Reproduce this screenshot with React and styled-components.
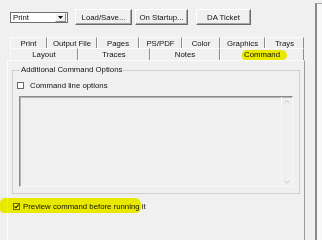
import React from 'react';
import styled, { createGlobalStyle } from 'styled-components';

const GlobalStyle = createGlobalStyle`
  html, body { margin: 0; padding: 0; background: #f0f0f0; }
  body {
    font-family: "Liberation Sans", Arial, sans-serif;
    font-size: 7.8px;
    color: #111;
  }
`;

const Screen = styled.div`
  width: 322px;
  height: 240px;
  overflow: hidden;
  display: flex;
  background: #f0f0f0;
  white-space: nowrap;
`;

const Dialog = styled.div`
  flex: 0 0 315px;
  display: flex;
  flex-direction: column;
  padding: 9px 0 0 7px;
  box-sizing: border-box;
`;

const SideWindow = styled.div`
  flex: 1;
  margin-top: 3px;
  border-left: 2px solid #8a8a8a;
  border-top: 1px solid #a8a8a8;
  background: #f8f8f8;
`;

const Toolbar = styled.div`
  display: flex;
  align-items: center;
  height: 16px;
  padding-left: 3px;
`;

const Combo = styled.div`
  width: 58px;
  height: 11px;
  box-sizing: border-box;
  display: flex;
  align-items: center;
  background: #fff;
  border: 1px solid #6e6e6e;
  padding-left: 2px;
`;

const ComboText = styled.span`
  flex: 1;
  line-height: 9px;
`;

const ComboArrow = styled.span`
  width: 9px;
  height: 7px;
  margin-right: 1px;
  display: flex;
  align-items: center;
  justify-content: center;
  background: #f0f0f0;
  border: 1px solid;
  border-color: #fff #8a8a8a #8a8a8a #fff;
`;

const Button = styled.div`
  width: ${p => p.$w}px;
  margin-left: ${p => p.$ml}px;
  height: 16px;
  box-sizing: border-box;
  display: flex;
  align-items: center;
  justify-content: center;
  border: 1px solid;
  border-color: #fff #6a6a6a #6a6a6a #fff;
  box-shadow: inset -1px -1px 0 #a8a8a8;
`;

const Tabs = styled.div`
  margin-top: 12px;
  display: flex;
  flex-direction: column;
  flex: 1;
`;

const TabRow = styled.div`
  display: flex;
  padding-left: 3px;
  height: ${p => p.$h}px;
`;

const Tab = styled.div`
  position: relative;
  width: ${p => p.$w}px;
  box-sizing: border-box;
  display: flex;
  align-items: center;
  justify-content: center;
  border-top: 1px solid #fbfbfb;
  border-left: 1px solid #fbfbfb;
  border-right: 1px solid #8c8c8c;
  line-height: 9px;
`;

const Marker = styled.span`
  position: absolute;
  left: ${p => p.$l}px;
  top: ${p => p.$t}px;
  width: ${p => p.$w}px;
  height: ${p => p.$h}px;
  background: #f7f700;
  border-radius: 5px 6px 5px 4px;
  mix-blend-mode: multiply;
  pointer-events: none;
`;

const Panel = styled.div`
  width: 298px;
  flex: 1;
  box-sizing: border-box;
  border-left: 1px solid #fbfbfb;
  border-top: 1px solid #fbfbfb;
  border-right: 1px solid #9a9a9a;
  padding: 4px 4px 0 4px;
`;

const Group = styled.fieldset`
  margin: 0;
  height: 129px;
  box-sizing: border-box;
  padding: 0 6px 6px 4px;
  border: 1px solid #cfcfcf;
  display: flex;
  flex-direction: column;
  min-width: 0;
`;

const Legend = styled.legend`
  padding: 0 1px;
  margin-left: 3px;
  line-height: 10px;
`;

const CheckRow = styled.label`
  position: relative;
  display: flex;
  align-items: center;
  gap: ${p => p.$gap}px;
  height: 12px;
  margin: ${p => p.$m};
`;

const Box = styled.span`
  width: 7px;
  height: 7px;
  box-sizing: border-box;
  background: #fff;
  border: 1px solid #6a6a6a;
  display: flex;
  align-items: center;
  justify-content: center;
`;

const TextArea = styled.div`
  margin: 5px 0 0 2px;
  flex: 1;
  display: flex;
  justify-content: flex-end;
  border: 1px solid;
  border-color: #8a8a8a #f8f8f8 #f8f8f8 #8a8a8a;
  box-shadow: inset 1px 1px 0 #b4b4b4;
  background: #f0f0f0;
`;

const ScrollBar = styled.div`
  width: 10px;
  display: flex;
  flex-direction: column;
  justify-content: space-between;
  align-items: center;
  padding: 3px 0 2px;
  border-left: 1px solid #f8f8f8;
`;

const Check = () => (
  <svg width="5" height="5" viewBox="0 0 5 5">
    <polyline points="0.5,2.3 2,3.8 4.6,0.6" fill="none" stroke="#111" strokeWidth="1.1" />
  </svg>
);

const Chevron = ({ down }) => (
  <svg width="6" height="4" viewBox="0 0 6 4">
    <polyline points={down ? '0.5,0.8 3,3.2 5.5,0.8' : '0.5,3.2 3,0.8 5.5,3.2'} fill="none" stroke="#c4c4c4" strokeWidth="1" />
  </svg>
);

const row1 = [['Print', 37], ['Output File', 50], ['Pages', 42], ['PS/PDF', 43], ['Color', 38], ['Graphics', 45], ['Trays', 39]];
const row2 = [['Layout', 68], ['Traces', 72], ['Notes', 70], ['Command', 84]];

export default function App() {
  return (
    <Screen>
      <GlobalStyle />
      <Dialog>
        <Toolbar>
          <Combo>
            <ComboText>Print</ComboText>
            <ComboArrow>
              <svg width="5" height="3" viewBox="0 0 5 3"><polygon points="0,0 5,0 2.5,3" fill="#111" /></svg>
            </ComboArrow>
          </Combo>
          <Button $w={57} $ml={7}>Load/Save...</Button>
          <Button $w={53} $ml={3}>On Startup...</Button>
          <Button $w={55} $ml={8}>DA Ticket</Button>
        </Toolbar>
        <Tabs>
          <TabRow $h={11}>
            {row1.map(([t, w]) => <Tab key={t} $w={w}>{t}</Tab>)}
          </TabRow>
          <TabRow $h={12}>
            {row2.map(([t, w]) => (
              <Tab key={t} $w={w}>
                {t}
                {t === 'Command' && <Marker $l={21} $t={1} $w={45} $h={10} />}
              </Tab>
            ))}
          </TabRow>
          <Panel>
            <Group>
              <Legend>Additional Command Options</Legend>
              <CheckRow $m="4px 0 0 0" $gap={6}>
                <Box />
                Command line options
              </CheckRow>
              <TextArea>
                <ScrollBar>
                  <Chevron />
                  <Chevron down />
                </ScrollBar>
              </TextArea>
            </Group>
            <CheckRow $m="6px 0 0 1px" $gap={3}>
              <Box><Check /></Box>
              Preview command before running it
              <Marker $l={-13} $t={-2} $w={141} $h={15} />
            </CheckRow>
          </Panel>
        </Tabs>
      </Dialog>
      <SideWindow />
    </Screen>
  );
}
